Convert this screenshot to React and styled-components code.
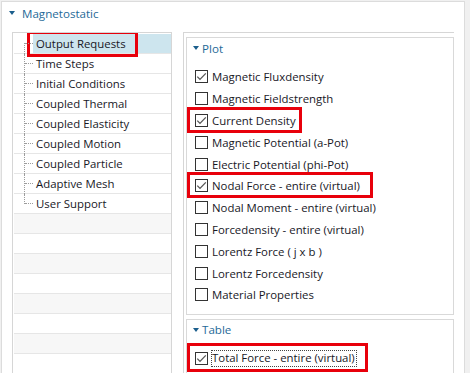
import React from 'react';
import styled, { createGlobalStyle } from 'styled-components';

const GlobalStyle = createGlobalStyle`
  html, body {
    margin: 0;
    padding: 0;
  }
  body {
    background: #f0f0f0;
    font-family: "Open Sans", "Noto Sans", sans-serif;
    font-size: 11.4px;
    color: #18181f;
    overflow: hidden;
  }
`;

const Frame = styled.div`
  box-sizing: border-box;
  width: 464px;
  height: 372px;
  margin: 1px 0 0 1px;
  border: 1px solid #dcdcdc;
  border-bottom: none;
  background: #fff;
  overflow: hidden;
`;

const Header = styled.div`
  height: 22px;
  display: flex;
  align-items: center;
  gap: 7px;
  padding-left: 7px;
  color: #1f6a98;
  font-size: 11.6px;
`;

const Caret = styled.span`
  width: 0;
  height: 0;
  border-left: 3.5px solid transparent;
  border-right: 3.5px solid transparent;
  border-top: 4px solid #1b5e8c;
`;

const Body = styled.div`
  display: flex;
  align-items: flex-start;
  gap: 11px;
  padding: 8px 0 0 10px;
`;

const TreePanel = styled.div`
  box-sizing: border-box;
  width: 160px;
  height: 341px;
  border: 1px solid #d6d6d6;
  border-bottom: none;
  padding: 1px 0 0 1px;
  overflow: hidden;
`;

const TreeRow = styled.div`
  position: relative;
  box-sizing: border-box;
  height: 20px;
  display: flex;
  padding-left: 19px;
  border-bottom: 1px solid #e6e6e6;
  background: ${({ $shade }) => ($shade ? '#f7f7f7' : 'transparent')};

  ${({ $branch, $first, $last }) =>
    $branch &&
    `
    &::before {
      content: '';
      position: absolute;
      left: 10px;
      top: ${$first ? '9px' : '0'};
      height: ${$last ? '10px' : $first ? '11px' : '20px'};
      border-left: 1px dotted #9c9c9c;
    }
    &::after {
      content: '';
      position: absolute;
      left: 11px;
      top: 9px;
      width: 8px;
      border-top: 1px dotted #9c9c9c;
    }
  `}
`;

const TreeLabel = styled.span`
  flex: 1;
  display: flex;
  align-items: center;
  padding-left: 3px;
  background: ${({ $selected }) => ($selected ? '#cde5ee' : 'transparent')};
`;

const Marker = styled.span`
  position: absolute;
  left: ${({ $left }) => $left}px;
  top: ${({ $top }) => $top}px;
  width: ${({ $w }) => $w}px;
  height: ${({ $h }) => $h}px;
  box-sizing: border-box;
  border: 3px solid #e8000b;
  pointer-events: none;
`;

const OptionsPanel = styled.div`
  box-sizing: border-box;
  width: 271px;
  height: 341px;
  border-top: 1px solid #d6d6d6;
  border-left: 1px solid #d6d6d6;
  padding: 4px 0 0 2px;
  display: flex;
  flex-direction: column;
  gap: 4px;
  overflow: hidden;
`;

const Section = styled.div`
  flex: none;
  border: 1px solid #d9d9d9;
  padding-bottom: 8px;
`;

const SectionHeader = styled.div`
  height: 20px;
  display: flex;
  align-items: center;
  gap: 3px;
  padding-left: 6px;
  color: #1f6a98;
  font-size: 11.6px;
`;

const ItemList = styled.div`
  padding-top: 8px;
`;

const Item = styled.div`
  position: relative;
  height: 21.8px;
  display: flex;
  align-items: center;
  gap: 4px;
  padding-left: 8px;
`;

const Box = styled.svg`
  flex: none;
  width: 13px;
  height: 13px;
`;

const FocusText = styled.span`
  border: 1px dotted #444;
  margin-left: -1px;
  padding: 0 1px 1px 0;
  line-height: 14px;
`;

const CheckBox = ({ checked }) => (
  <Box viewBox="0 0 13 13">
    <rect x="0.5" y="0.5" width="12" height="12" fill="#fff" stroke="#333" />
    {checked && (
      <polyline
        points="2.3,6.6 5,9.4 10.8,3.4"
        fill="none"
        stroke="#555"
        strokeWidth="1.3"
      />
    )}
  </Box>
);

const tree = [
  'Output Requests',
  'Time Steps',
  'Initial Conditions',
  'Coupled Thermal',
  'Coupled Elasticity',
  'Coupled Motion',
  'Coupled Particle',
  'Adaptive Mesh',
  'User Support',
];

const plotItems = [
  { label: 'Magnetic Fluxdensity', checked: true },
  { label: 'Magnetic Fieldstrength' },
  { label: 'Current Density', checked: true, mark: 115 },
  { label: 'Magnetic Potential (a-Pot)' },
  { label: 'Electric Potential (phi-Pot)' },
  { label: 'Nodal Force - entire (virtual)', checked: true, mark: 186 },
  { label: 'Nodal Moment - entire (virtual)' },
  { label: 'Forcedensity - entire (virtual)' },
  { label: 'Lorentz Force ( j x b )' },
  { label: 'Lorentz Forcedensity' },
  { label: 'Material Properties' },
];

export default function App() {
  return (
    <>
      <GlobalStyle />
      <Frame>
        <Header>
          <Caret />
          Magnetostatic
        </Header>
        <Body>
          <TreePanel>
            {tree.map((name, i) => (
              <TreeRow
                key={name}
                $branch
                $first={i === 0}
                $last={i === tree.length - 1}
              >
                <TreeLabel $selected={i === 0}>{name}</TreeLabel>
                {i === 0 && <Marker $left={13} $top={-3} $w={111} $h={26} />}
              </TreeRow>
            ))}
            {Array.from({ length: 8 }, (_, i) => (
              <TreeRow key={i} $shade={i % 2 === 0} />
            ))}
          </TreePanel>
          <OptionsPanel>
            <Section>
              <SectionHeader>
                <Caret />
                Plot
              </SectionHeader>
              <ItemList>
                {plotItems.map((it) => (
                  <Item key={it.label}>
                    <CheckBox checked={it.checked} />
                    {it.label}
                    {it.mark && <Marker $left={0} $top={-3} $w={it.mark} $h={26} />}
                  </Item>
                ))}
              </ItemList>
            </Section>
            <Section>
              <SectionHeader>
                <Caret />
                Table
              </SectionHeader>
              <ItemList>
                <Item>
                  <CheckBox checked />
                  <FocusText>Total Force - entire (virtual)</FocusText>
                  <Marker $left={0} $top={-5} $w={181} $h={29} />
                </Item>
              </ItemList>
            </Section>
          </OptionsPanel>
        </Body>
      </Frame>
    </>
  );
}
